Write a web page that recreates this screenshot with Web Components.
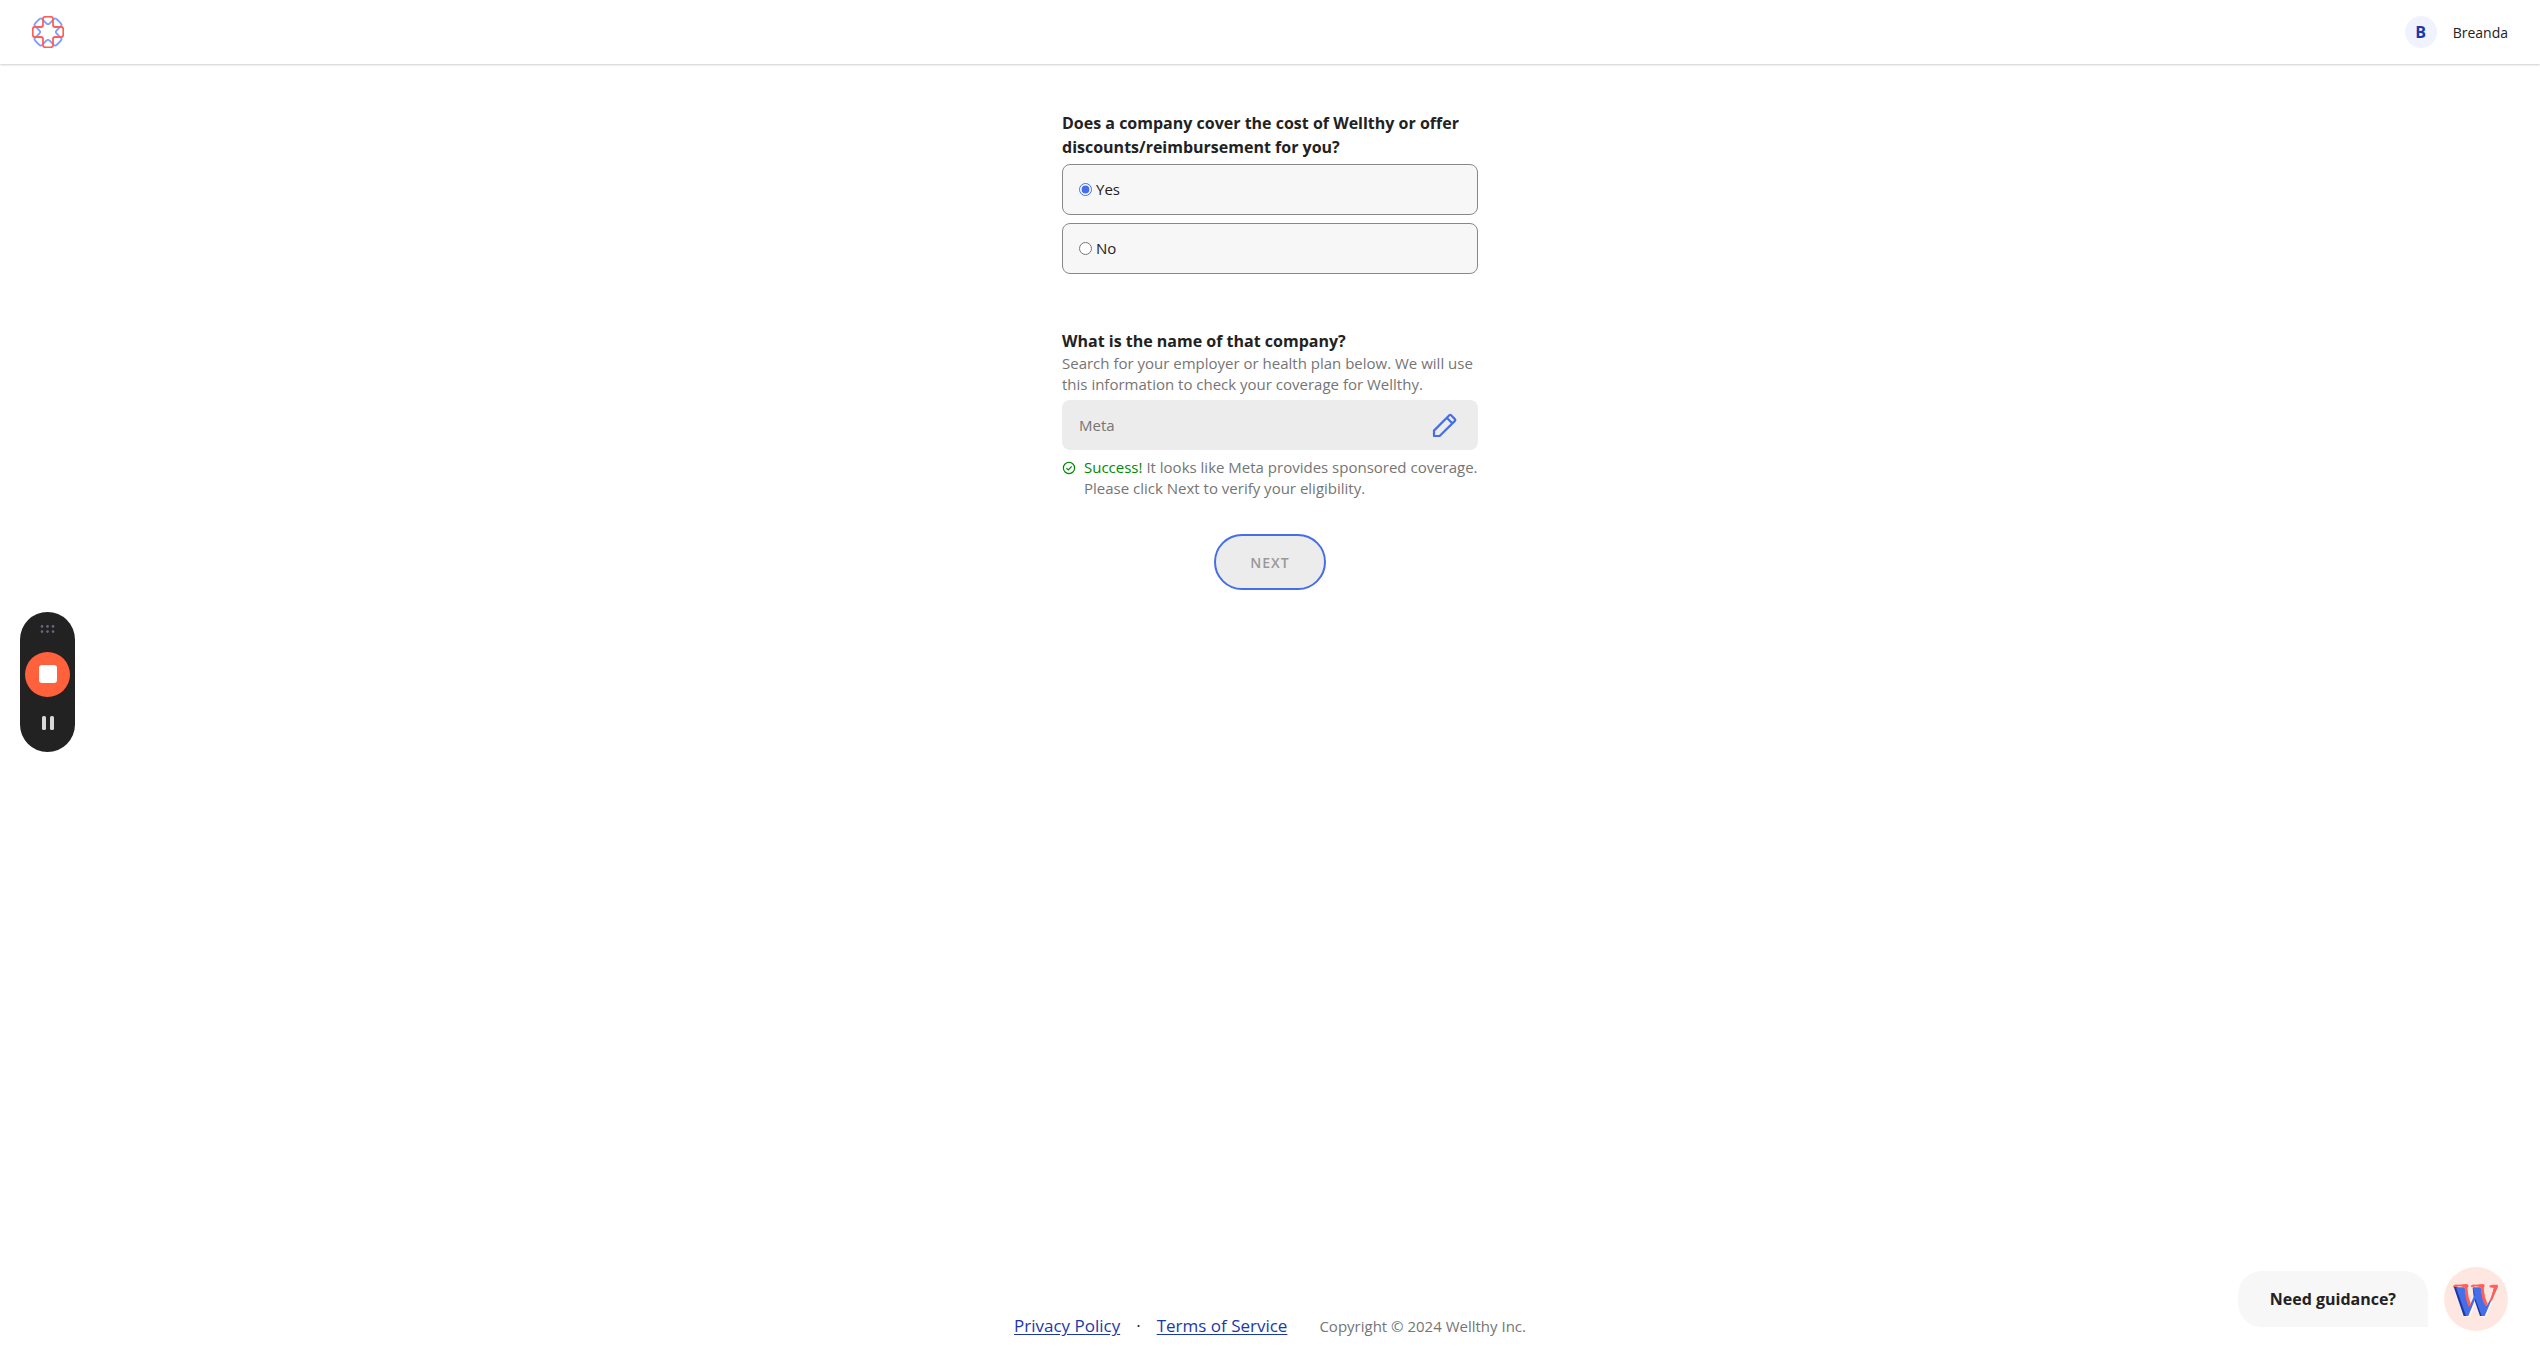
<!DOCTYPE html>
<html lang="en">
<head>
<meta charset="utf-8">
<title>Wellthy</title>
<style>
  :root {
    --ink: #222;
    --muted: #757575;
    --blue: #456ee8;
    --navy: #1a39a9;
    --surface: #f7f7f7;
    --disabled: #ececec;
    --text-sm: 14px;
    --text: 15px;
    --text-lg: 16px;
    --text-xl: 17px;
  }
  body {
    margin: 0;
    font-family: "Open Sans", "Noto Sans", sans-serif;
    font-size: var(--text);
    line-height: 21px;
    color: var(--ink);
    background: #fff;
  }
</style>
</head>
<body>
<w-page>
  <w-header slot="header" name="Breanda"></w-header>
  <w-coverage-form></w-coverage-form>
  <w-footer slot="footer"></w-footer>
</w-page>
<w-recorder></w-recorder>
<w-chat>Need guidance?</w-chat>

<script>
class Page extends HTMLElement {
  constructor() {
    super()
    this.attachShadow({ mode: "open" })
    this.shadowRoot.innerHTML = `
    <style>
    :host {
        display: flex;
        flex-direction: column;
        min-height: 100vh;
    }
    main {
        flex: 1;
        padding: 47px 16px;
    }
    </style>
    <slot name="header"></slot>
    <main><slot></slot></main>
    <slot name="footer"></slot>`
  }
}

class Logo extends HTMLElement {
  constructor() {
    super()
    this.attachShadow({ mode: "open" })
    // one rounded cross, drawn twice with the second turned 45 degrees
    const cross = "M-5 -13.6 Q-5 -15 -3.6 -15.1 Q0 -15.5 3.6 -15.1 Q5 -15 5 -13.6 V-7 Q5 -5 7 -5 H13.6 Q15 -5 15.1 -3.6 Q15.5 0 15.1 3.6 Q15 5 13.6 5 H7 Q5 5 5 7 V13.6 Q5 15 3.6 15.1 Q0 15.5 -3.6 15.1 Q-5 15 -5 13.6 V7 Q-5 5 -7 5 H-13.6 Q-15 5 -15.1 3.6 Q-15.5 0 -15.1 -3.6 Q-15 -5 -13.6 -5 H-7 Q-5 -5 -5 -7 Z"
    this.shadowRoot.innerHTML = `
    <style>
    :host { display: block; width: 32px; height: 32px; }
    svg { display: block; }
    path { fill: none; stroke-width: 1.8; }
    </style>
    <svg width="32" height="32" viewBox="-16 -16 32 32" aria-hidden="true">
      <path d="${cross}" stroke="#7f9cff" transform="rotate(45)"/>
      <path d="${cross}" stroke="#ff5f57"/>
    </svg>`
  }
}

class Header extends HTMLElement {
  constructor() {
    super()
    const name = this.getAttribute("name") || ""
    this.attachShadow({ mode: "open" })
    this.shadowRoot.innerHTML = `
    <style>
    header {
        display: flex;
        justify-content: space-between;
        align-items: center;
        height: 64px;
        padding: 0 32px;
        box-shadow: 0 1px 2px rgba(0,0,0, 0.2);
    }
    .user {
        display: flex;
        align-items: center;
        gap: 16px;
        font-size: var(--text-sm);
    }
    .avatar {
        display: grid;
        place-items: center;
        width: 32px;
        height: 32px;
        border-radius: 50%;
        background: #f0f3fe;
        color: var(--navy);
        font-size: var(--text-lg);
        font-weight: 700;
    }
    </style>
    <header>
      <w-logo></w-logo>
      <div class="user">
        <span class="avatar">${name.charAt(0)}</span>
        <span>${name}</span>
      </div>
    </header>`
  }
}

class CoverageForm extends HTMLElement {
  constructor() {
    super()
    this.attachShadow({ mode: "open" })
    this.shadowRoot.innerHTML = `
    <style>
    :host {
        display: block;
        max-width: 416px;
        margin: 0 auto;
    }
    fieldset {
        border: 0;
        margin: 0 0 55px;
        padding: 0;
    }
    legend, .title {
        display: block;
        padding: 0;
        font-size: var(--text-lg);
        line-height: 24px;
        font-weight: 700;
    }
    .options {
        display: grid;
        gap: 8px;
        padding-top: 5px;
    }
    .option {
        display: flex;
        align-items: center;
        gap: 4px;
        height: 51px;
        box-sizing: border-box;
        padding: 0 16px;
        border: 1px solid #888;
        border-radius: 8px;
        background: var(--surface);
    }
    input[type=radio] {
        margin: 0;
        width: 13px;
        height: 13px;
        accent-color: var(--blue);
    }
    p { margin: 0; color: var(--muted); }
    .field {
        display: flex;
        align-items: center;
        height: 50px;
        margin: 5px 0 7px;
        padding: 0 20px 0 17px;
        border-radius: 8px;
        background: var(--disabled);
    }
    .field input {
        flex: 1;
        min-width: 0;
        padding: 0;
        border: 0;
        background: none;
        font: inherit;
        color: var(--muted);
    }
    .edit {
        padding: 0;
        border: 0;
        background: none;
    }
    svg { display: block; }
    .status {
        display: flex;
        gap: 8px;
    }
    .status svg { margin-top: 4px; flex: none; }
    .status span { color: #008a00; }
    .actions {
        display: flex;
        justify-content: center;
        padding-top: 35px;
    }
    .next {
        width: 112px;
        height: 56px;
        border: 2px solid var(--blue);
        border-radius: 28px;
        background: var(--disabled);
        color: #999;
        font: inherit;
        font-size: var(--text-sm);
        font-weight: 600;
        letter-spacing: 1px;
    }
    </style>
    <form>
      <fieldset>
        <legend>Does a company cover the cost of Wellthy or offer discounts/reimbursement for you?</legend>
        <div class="options">
          <label class="option"><input type="radio" name="covered" value="yes" checked>Yes</label>
          <label class="option"><input type="radio" name="covered" value="no">No</label>
        </div>
      </fieldset>
      <label class="title" for="company">What is the name of that company?</label>
      <p id="hint">Search for your employer or health plan below. We will use this information to check your coverage for Wellthy.</p>
      <div class="field">
        <input id="company" type="text" value="Meta" aria-describedby="hint" readonly>
        <button class="edit" type="button" aria-label="Edit company">
          <svg width="26" height="26" viewBox="0 0 26 26" fill="none" stroke="#456ee8" stroke-width="2.2" stroke-linejoin="round">
            <path d="M2 24 V18.6 L17.3 3.3 Q18.2 2.4 19.1 3.3 L22.9 7.1 Q23.8 8 22.9 8.9 L7.6 24 Z"/>
            <path d="M15 6 L20.5 11.5"/>
          </svg>
        </button>
      </div>
      <div class="status">
        <svg width="14" height="14" viewBox="0 0 14 14" fill="none" stroke="#008a00" stroke-width="1.2">
          <circle cx="7" cy="7" r="5.6"/>
          <path d="M4.4 7.2 L6.3 9 L9.7 5.3"/>
        </svg>
        <p><span>Success!</span> It looks like Meta provides sponsored coverage. Please click Next to verify your eligibility.</p>
      </div>
      <div class="actions">
        <button class="next" type="button">NEXT</button>
      </div>
    </form>`
  }
}

class Footer extends HTMLElement {
  constructor() {
    super()
    this.attachShadow({ mode: "open" })
    this.shadowRoot.innerHTML = `
    <style>
    footer {
        display: flex;
        justify-content: center;
        align-items: baseline;
        gap: 16px;
        padding: 0 16px 25px;
        line-height: 24px;
    }
    a, .dot { font-size: var(--text-xl); }
    a { color: var(--navy); text-underline-offset: 2px; }
    small {
        margin-left: 16px;
        font-size: var(--text);
        color: var(--muted);
    }
    </style>
    <footer>
      <a href="#privacy">Privacy Policy</a>
      <span class="dot">·</span>
      <a href="#terms">Terms of Service</a>
      <small>Copyright © 2024 Wellthy Inc.</small>
    </footer>`
  }
}

class Recorder extends HTMLElement {
  constructor() {
    super()
    this.attachShadow({ mode: "open" })
    this.shadowRoot.innerHTML = `
    <style>
    :host {
        position: fixed;
        left: 20px;
        top: calc(50% - 70px);
        z-index: 10;
        display: flex;
        flex-direction: column;
        align-items: center;
        box-sizing: border-box;
        width: 55px;
        height: 140px;
        padding-top: 13px;
        border-radius: 28px;
        background: #222;
    }
    svg { display: block; }
    button { padding: 0; border: 0; background: none; }
    .stop {
        display: grid;
        place-items: center;
        width: 45px;
        height: 45px;
        margin: 19px 0;
        border-radius: 50%;
        background: #ff613d;
    }
    .stop::before {
        content: "";
        width: 18px;
        height: 18px;
        border-radius: 3px;
        background: #fff;
    }
    </style>
    <svg width="15" height="8" viewBox="0 0 15 8" fill="#6b6880">
      <circle cx="2" cy="1.4" r="1.3"/><circle cx="7.5" cy="1.4" r="1.3"/><circle cx="13" cy="1.4" r="1.3"/>
      <circle cx="2" cy="6.6" r="1.3"/><circle cx="7.5" cy="6.6" r="1.3"/><circle cx="13" cy="6.6" r="1.3"/>
    </svg>
    <button class="stop" aria-label="Stop recording"></button>
    <button aria-label="Pause recording">
      <svg width="12" height="14" viewBox="0 0 12 14" fill="#d9d9d9">
        <rect width="4" height="14" rx="1.6"/><rect x="8" width="4" height="14" rx="1.6"/>
      </svg>
    </button>`
  }
}

class Chat extends HTMLElement {
  constructor() {
    super()
    this.attachShadow({ mode: "open" })
    this.shadowRoot.innerHTML = `
    <style>
    :host {
        position: fixed;
        right: 32px;
        bottom: 32px;
        z-index: 10;
        display: flex;
        align-items: center;
        gap: 16px;
    }
    .bubble {
        padding: 16px 32px;
        border-radius: 24px 24px 0 24px;
        background: var(--surface);
        font-size: var(--text-lg);
        line-height: 24px;
        font-weight: 700;
    }
    button { padding: 0; border: 0; background: none; }
    svg { display: block; }
    </style>
    <div class="bubble"><slot></slot></div>
    <button aria-label="Open chat">
      <svg width="64" height="64" viewBox="24 21 192 192">
        <circle cx="120" cy="117" r="96" fill="#ffe7e1"/>
        <path fill="#fff" opacity=".7" d="M90 170 H102 L122 118 L136 170 H150 L188 84 L180 84 L146 166 H140 L120 108 L98 166 Z"/>
        <path fill="#1a39a9" d="M53 80 L64 80 L94 168 H83 Z M110 84 L118 84 L142 168 H132 L114 116 Z"/>
        <path fill="#456ee8" d="M60 82 H86 L92 116 L101 137 L116 104 L110 82 H134 L140 112 L152 137 L167 112 L174 82 L182 84 L146 168 H137 L118 116 L97 168 H90 Z"/>
        <path fill="#ff5f57" d="M51 78 Q56 73 66 74 L90 72 Q98 72 98 78 L94 84 L98 112 L105 134 L98 140 Q88 122 86 82 L72 79 L52 82 Z"/>
        <path fill="#ff5f57" d="M104 78 Q109 73 118 74 L138 72 Q147 72 146 78 L143 84 L147 112 L155 132 L149 139 Q137 124 134 82 L120 79 L106 82 Z"/>
        <path fill="#ff5f57" d="M160 77 Q166 74 172 74 H185 L186 80 L168 122 L161 124 L174 84 L161 82 Z"/>
      </svg>
    </button>`
  }
}

customElements.define("w-page", Page)
customElements.define("w-logo", Logo)
customElements.define("w-header", Header)
customElements.define("w-coverage-form", CoverageForm)
customElements.define("w-footer", Footer)
customElements.define("w-recorder", Recorder)
customElements.define("w-chat", Chat)
</script>
</body>
</html>
